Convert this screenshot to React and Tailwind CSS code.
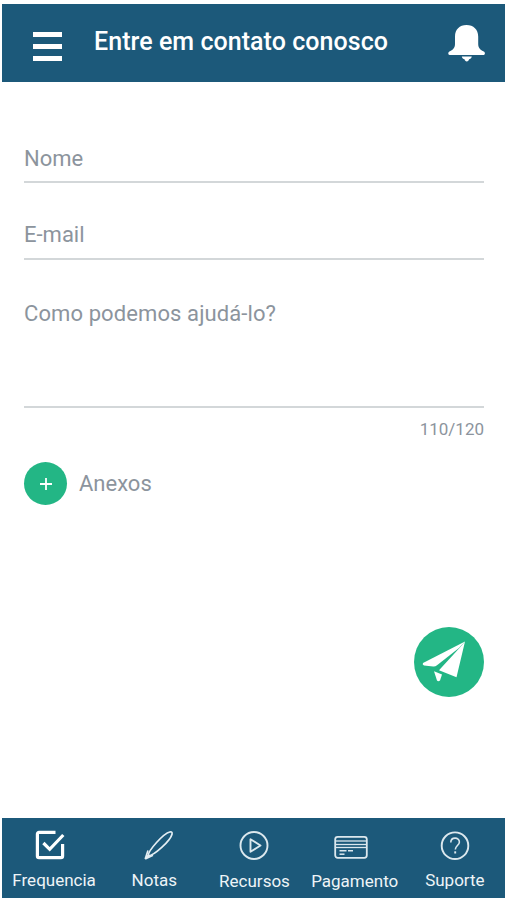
import React, { useState } from "react";

const tabs = [
  { label: "Frequencia", Icon: CheckIcon, icon: "-ml-2", text: "mt-2.5" },
  { label: "Notas", Icon: FeatherIcon, icon: "ml-2.5", text: "mt-2.5" },
  { label: "Recursos", Icon: PlayIcon, icon: "", text: "mt-[11px]" },
  { label: "Pagamento", Icon: CardIcon, icon: "-ml-2", text: "mt-[11px]" },
  { label: "Suporte", Icon: HelpIcon, icon: "", text: "mt-2.5" },
];

function BellIcon() {
  return (
    <svg width="38" height="40" viewBox="0 0 38 40" fill="#fff">
      <path d="M18.500 1C11.500 1 7 5.500 7 12.500V20c0 3.800-1.800 5.800-6 7.800-1.200.8-.8 3.200.6 3.200h34c1.400 0 1.800-2.400.6-3.200-4.200-2-6-4-6-7.800v-7.500C30.200 5.500 25.500 1 18.500 1z" />
      <path d="M13.800 32.400h10c-.4 1.800-1.600 2.400-2.700 2.800-.5 1.400-1 2.200-2.300 2.200s-1.800-.8-2.300-2.200c-1.100-.4-2.300-1-2.700-2.800z" />
    </svg>
  );
}

function PlaneIcon() {
  return (
    <svg width="70" height="70" viewBox="0 0 70 70" fill="#fff">
      <path d="M51 14.500 9 36q-1 1.800 1 2.400l9.200 1q2 .2 3.800-1.200L45 21z" />
      <path d="M51 14.500 42.500 50.200 25 43.300 45 21.500z" />
      <path d="M20 44.200 28 47.400 26 53.500q-1.800 1.600-3 0z" />
    </svg>
  );
}

function CheckIcon() {
  return (
    <svg width="30" height="30" viewBox="0 0 30 30" fill="none" stroke="#fff" strokeWidth="3.200">
      <path d="M20.500 2.400H4a1.600 1.600 0 0 0-1.600 1.600v22A1.600 1.600 0 0 0 4 27.600h22a1.600 1.600 0 0 0 1.600-1.600V14" />
      <path d="m8.400 13 6.300 6.300L28.300 5" />
    </svg>
  );
}

function FeatherIcon() {
  return (
    <svg width="30" height="30" viewBox="0 0 30 30" fill="none" stroke="#e4eef3" strokeWidth="1.700" strokeLinejoin="round">
      <path d="M4.200 25.800C4 20.500 19.500 3.500 25.800 2c2-.4 2.600.4 2.200 2.200C26.500 10.500 10 26 4.200 25.800z" />
      <path d="M1.200 29 4 20.500M1.200 29 9 25.200M1.200 29l3.400-3.600" />
    </svg>
  );
}

function PlayIcon() {
  return (
    <svg width="30" height="30" viewBox="0 0 30 30" fill="none" stroke="#dce8ee" strokeWidth="1.900" strokeLinejoin="round">
      <circle cx="15" cy="15.500" r="13.500" />
      <path d="M11.500 9.200v12.600L21.500 15.500z" />
    </svg>
  );
}

function CardIcon() {
  return (
    <svg width="34" height="30" viewBox="0 0 34 30" fill="none" stroke="#dce8ee" strokeWidth="1.800">
      <rect x="1.200" y="6.800" width="31.600" height="21" rx="2.500" />
      <path d="M1 11h32" strokeWidth="1.300" />
      <path d="M1 14.500h32" strokeWidth="1.300" />
      <path d="M1 17.500h32" strokeWidth="1.300" />
      <path d="M5.500 20.700h7M14 20.700h5" strokeWidth="1.500" />
      <path d="M5.500 24.200h5" strokeWidth="1.500" />
    </svg>
  );
}

function HelpIcon() {
  return (
    <svg width="30" height="30" viewBox="0 0 30 30" fill="none" stroke="#dce8ee" strokeWidth="1.900">
      <circle cx="15" cy="15.700" r="13.300" />
      <path d="M10.800 12.500c0-5.800 8.600-5.600 8.600-.6 0 3.400-4.100 3.800-4.100 7.600" strokeWidth="1.600" />
      <path d="M15.200 21.300v2.200" />
    </svg>
  );
}

export default function App() {
  const [name, setName] = useState("");
  const [email, setEmail] = useState("");
  const [message, setMessage] = useState("");

  const field = "block w-full border-b-2 border-[#d3d7d9] bg-transparent outline-none text-[22px] placeholder:text-[#8c949d]";

  return (
    <div className="flex h-[900px] w-[506px] flex-col bg-white pt-1 pb-0.5 pl-[2px] pr-px font-['Roboto',sans-serif] text-[#8c949d]">
      <header className="flex h-[78px] shrink-0 items-start bg-[#1c597a] pl-[31px] pr-[19px] text-white">
        <button aria-label="Menu" className="mt-7 flex w-[29px] flex-col gap-[7px]">
          <span className="h-[5px] w-full bg-white" />
          <span className="h-[5px] w-full bg-white" />
          <span className="h-[5px] w-full bg-white" />
        </button>
        <h1 className="ml-8 mt-[22px] whitespace-nowrap text-[25px] leading-8 font-medium tracking-[0.05px]">Entre em contato conosco</h1>
        <button aria-label="Notificações" className="mt-5 ml-auto">
          <BellIcon />
        </button>
      </header>

      <main className="flex flex-1 flex-col pl-[22px] pr-[21px]">
        <input className={`${field} mt-[61px] h-10 pb-2`} placeholder="Nome" value={name} onChange={(e) => setName(e.target.value)} />
        <input className={`${field} mt-[37px] h-10 pb-[9px]`} placeholder="E-mail" value={email} onChange={(e) => setEmail(e.target.value)} />
        <textarea className={`${field} mt-10 h-[108px] resize-none leading-7 tracking-[0.1px]`} maxLength={120} placeholder="Como podemos ajudá-lo?" value={message} onChange={(e) => setMessage(e.target.value)} />
        <div className="mt-[9px] text-right text-[17px] leading-6">110/120</div>
        <div className="mt-[21px] flex items-center">
          <button aria-label="Adicionar anexo" className="flex size-[43px] items-center justify-center rounded-full bg-[#23b685]">
            <svg width="12" height="12" viewBox="0 0 12 12" stroke="#fff" strokeWidth="1.800">
              <path d="M6 0v12M0 6h12" />
            </svg>
          </button>
          <span className="ml-3 text-[22px] leading-7">Anexos</span>
        </div>
        <button aria-label="Enviar" className="mt-[122px] size-[70px] self-end rounded-full bg-[#23b685]">
          <PlaneIcon />
        </button>
      </main>

      <nav className="grid h-20 shrink-0 grid-cols-5 bg-[#1c597a] pl-0.5 text-[#eef4f7]">
        {tabs.map(({ label, Icon, icon, text }) => (
          <button key={label} className="flex flex-col items-center pt-3">
            <span className={icon}>
              <Icon />
            </span>
            <span className={`${text} text-[17px] leading-5`}>{label}</span>
          </button>
        ))}
      </nav>
    </div>
  );
}
